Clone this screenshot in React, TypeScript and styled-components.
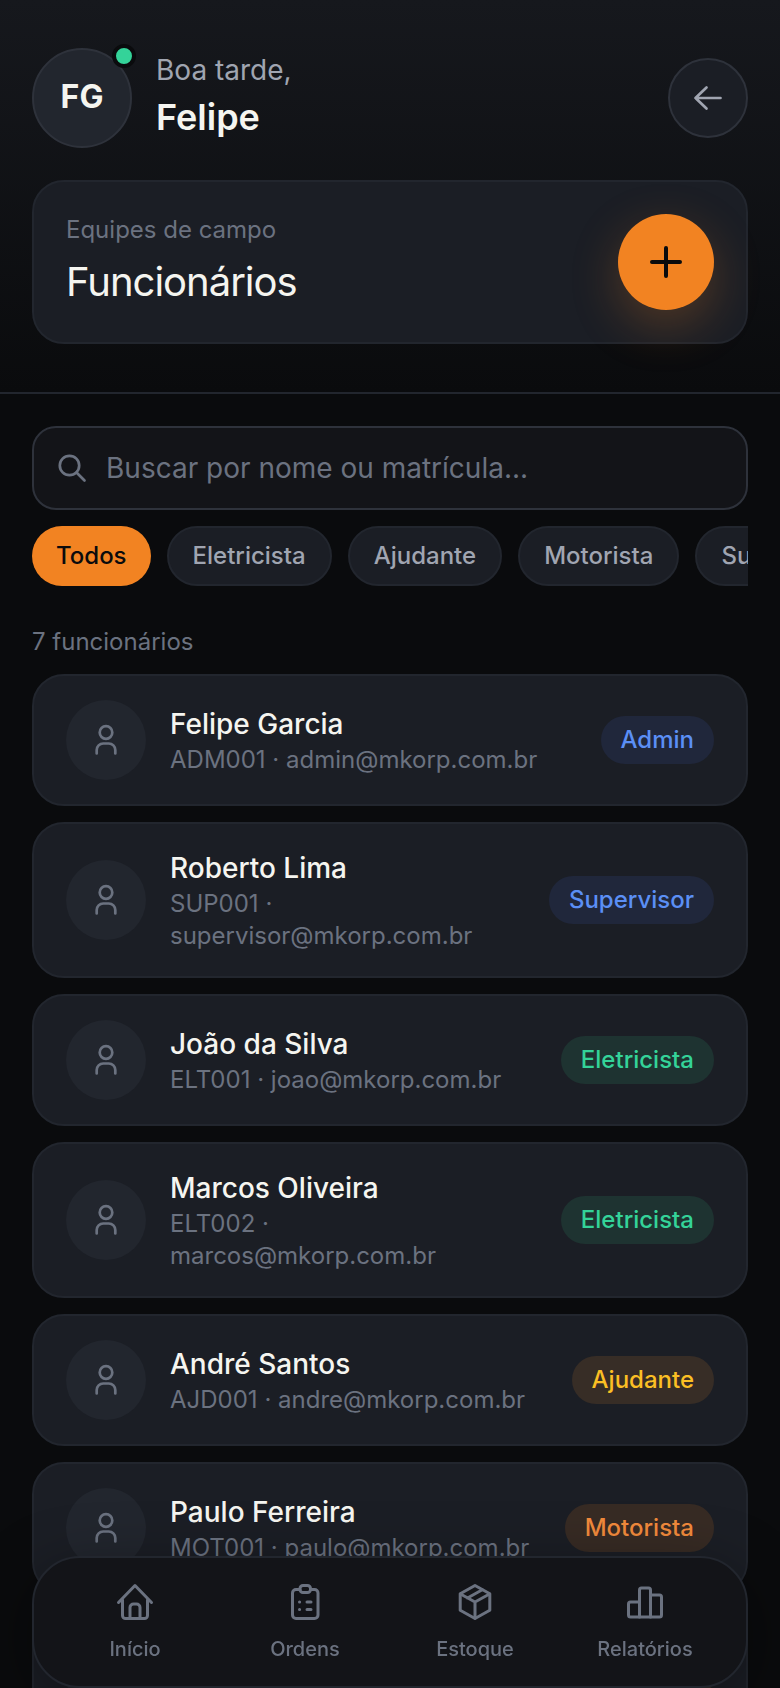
import React from "react";
import styled, { createGlobalStyle } from "styled-components";

const c = {
  bg: "#0a0b0d",
  surface: "#131418",
  card: "#1b1e25",
  raised: "#22262e",
  line: "#22262e",
  lineStrong: "#2e323b",
  text: "#f5f5f0",
  soft: "#a0a5b1",
  muted: "#6b7280",
  accent: "#f28322",
};

const GlobalStyle = createGlobalStyle`
  *, *::before, *::after { box-sizing: border-box; }
  body {
    margin: 0;
    background: ${c.bg};
    color: ${c.text};
    font-family: Inter, "Liberation Sans", sans-serif;
  }
  button, input { font-family: inherit; }
  h1, p, ul { margin: 0; padding: 0; }
`;

const Screen = styled.div`
  height: 100vh;
  overflow: hidden auto;
  scrollbar-width: none;
  background: ${c.bg};
`;

const Header = styled.header`
  display: flex;
  flex-direction: column;
  gap: 32px;
  padding: 48px 32px;
  border-bottom: 2px solid ${c.line};
  background: linear-gradient(180deg, #16181d 0%, ${c.bg} 100%);
`;

const HeaderRow = styled.div`
  display: flex;
  align-items: center;
  gap: 24px;
`;

const Avatar = styled.div`
  position: relative;
  display: flex;
  align-items: center;
  justify-content: center;
  width: 100px;
  height: 100px;
  padding-bottom: 4px;
  border: 2px solid ${c.lineStrong};
  border-radius: 50%;
  background: ${c.raised};
  font-size: 32px;
  font-weight: 700;
`;

const OnlineDot = styled.span`
  position: absolute;
  top: -6px;
  right: -6px;
  width: 24px;
  height: 24px;
  border: 4px solid ${c.bg};
  border-radius: 50%;
  background: #34d399;
`;

const Greeting = styled.div`
  display: flex;
  flex: 1;
  flex-direction: column;
  gap: 2px;
`;

const GreetingText = styled.p`
  color: ${c.soft};
  font-size: 28px;
  line-height: 36px;
`;

const UserName = styled.p`
  font-size: 36px;
  font-weight: 600;
  line-height: 54px;
`;

const RoundButton = styled.button<{ $accent?: boolean }>`
  display: flex;
  flex: none;
  align-items: center;
  justify-content: center;
  width: ${(p) => (p.$accent ? 96 : 80)}px;
  height: ${(p) => (p.$accent ? 96 : 80)}px;
  padding: 0;
  border: ${(p) => (p.$accent ? "0" : `2px solid ${c.lineStrong}`)};
  border-radius: 50%;
  background: ${(p) => (p.$accent ? c.accent : c.card)};
  color: ${(p) => (p.$accent ? c.bg : c.soft)};
  box-shadow: ${(p) => (p.$accent ? "0 16px 48px rgba(242, 131, 34, 0.25)" : "none")};
`;

const TitleCard = styled.section`
  display: flex;
  align-items: center;
  justify-content: space-between;
  padding: 28px 32px;
  border: 2px solid ${c.line};
  border-radius: 32px;
  background: ${c.card};
`;

const Eyebrow = styled.p`
  color: ${c.muted};
  font-size: 24px;
  line-height: 40px;
`;

const Title = styled.h1`
  font-size: 40px;
  font-weight: 400;
  line-height: 64px;
  letter-spacing: -1px;
`;

const Content = styled.main`
  padding: 32px 32px 180px;
`;

const SearchBox = styled.label`
  display: flex;
  align-items: center;
  gap: 18px;
  height: 84px;
  padding: 0 22px;
  border: 2px solid ${c.lineStrong};
  border-radius: 24px;
  background: ${c.surface};
  color: ${c.muted};
`;

const SearchInput = styled.input`
  flex: 1;
  min-width: 0;
  padding: 0;
  border: 0;
  outline: 0;
  background: transparent;
  color: ${c.text};
  font-size: 28px;
  &::placeholder { color: ${c.muted}; opacity: 1; }
`;

const Chips = styled.div`
  display: flex;
  gap: 16px;
  margin-top: 16px;
  overflow-x: auto;
  scrollbar-width: none;
`;

const Chip = styled.button<{ $active?: boolean }>`
  flex: none;
  padding: 10px 24px;
  border: ${(p) => (p.$active ? "0" : `2px solid ${c.line}`)};
  border-radius: 30px;
  background: ${(p) => (p.$active ? c.accent : c.card)};
  color: ${(p) => (p.$active ? c.bg : c.soft)};
  font-size: 24px;
  font-weight: 500;
  line-height: 36px;
`;

const Count = styled.p`
  margin: 36px 0 12px;
  color: ${c.muted};
  font-size: 24px;
  line-height: 40px;
`;

const List = styled.ul`
  display: flex;
  flex-direction: column;
  gap: 16px;
  list-style: none;
`;

const PersonCard = styled.li`
  display: flex;
  align-items: center;
  gap: 24px;
  padding: 24px 32px;
  border: 2px solid ${c.line};
  border-radius: 32px;
  background: ${c.card};
`;

const PersonIcon = styled.span`
  display: flex;
  flex: none;
  align-items: center;
  justify-content: center;
  width: 80px;
  height: 80px;
  border-radius: 50%;
  background: ${c.raised};
  color: ${c.muted};
`;

const PersonInfo = styled.div`
  flex: 1;
  min-width: 0;
`;

const PersonName = styled.p`
  font-size: 28px;
  font-weight: 500;
  line-height: 40px;
`;

const PersonDetail = styled.p`
  color: ${c.muted};
  font-size: 24px;
  line-height: 32px;
`;

const tones = {
  blue: ["#5b8ff5", "#20273b"],
  green: ["#34d399", "#1e3331"],
  yellow: ["#fbbf24", "#372d26"],
  orange: ["#f28a3c", "#372b24"],
};
type Tone = keyof typeof tones;

const Badge = styled.span<{ $tone: Tone }>`
  flex: none;
  padding: 6px 20px;
  border-radius: 24px;
  background: ${(p) => tones[p.$tone][1]};
  color: ${(p) => tones[p.$tone][0]};
  font-size: 24px;
  font-weight: 500;
  line-height: 36px;
`;

const TabBar = styled.nav`
  position: fixed;
  right: 32px;
  bottom: 0;
  left: 32px;
  display: flex;
  padding: 22px 16px 20px;
  border: 2px solid ${c.line};
  border-radius: 48px;
  background: ${c.surface};
  box-shadow: 0 16px 64px rgba(0, 0, 0, 0.4);
`;

const Tab = styled.a`
  display: flex;
  flex: 1;
  flex-direction: column;
  align-items: center;
  gap: 8px;
  color: ${c.muted};
  font-size: 20px;
  font-weight: 500;
  line-height: 34px;
  text-decoration: none;
`;

type IconProps = { size: number; stroke: number; children: React.ReactNode };
const Icon = ({ size, stroke, children }: IconProps) => (
  <svg
    width={size}
    height={size}
    viewBox={`0 0 ${size} ${size}`}
    fill="none"
    stroke="currentColor"
    strokeWidth={stroke}
    strokeLinecap="round"
    strokeLinejoin="round"
    aria-hidden="true"
  >
    {children}
  </svg>
);

const people: { name: string; code: string; email: string; role: string; tone: Tone }[] = [
  { name: "Felipe Garcia", code: "ADM001", email: "admin@mkorp.com.br", role: "Admin", tone: "blue" },
  { name: "Roberto Lima", code: "SUP001", email: "supervisor@mkorp.com.br", role: "Supervisor", tone: "blue" },
  { name: "João da Silva", code: "ELT001", email: "joao@mkorp.com.br", role: "Eletricista", tone: "green" },
  { name: "Marcos Oliveira", code: "ELT002", email: "marcos@mkorp.com.br", role: "Eletricista", tone: "green" },
  { name: "André Santos", code: "AJD001", email: "andre@mkorp.com.br", role: "Ajudante", tone: "yellow" },
  { name: "Paulo Ferreira", code: "MOT001", email: "paulo@mkorp.com.br", role: "Motorista", tone: "orange" },
  { name: "Carlos Souza", code: "AJD002", email: "carlos@mkorp.com.br", role: "Ajudante", tone: "yellow" },
];

const filters = ["Todos", "Eletricista", "Ajudante", "Motorista", "Supervisor", "Admin"];

const tabs = [
  {
    label: "Início",
    icon: (
      <>
        <path d="M5.5 22.5 22 5.500l16.500 17" />
        <path d="M9.500 20v15.500a3 3 0 0 0 3 3h19a3 3 0 0 0 3-3V20" />
        <path d="M17 38V27.500a3.500 3.500 0 0 1 3.500-3.500h3a3.500 3.500 0 0 1 3.500 3.500V38" />
      </>
    ),
  },
  {
    label: "Ordens",
    icon: (
      <>
        <path d="M17 9.500h-4a3.500 3.500 0 0 0-3.500 3.500v22a3.500 3.500 0 0 0 3.500 3.500h18.500a3.500 3.500 0 0 0 3.500-3.500V13a3.500 3.500 0 0 0-3.500-3.500h-4" />
        <rect x="17" y="5.500" width="10.500" height="7" rx="3" />
        <path d="M16.500 22h.1M16.500 29.500h.1M24 22h4M24 29.500h4" />
      </>
    ),
  },
  {
    label: "Estoque",
    icon: (
      <>
        <path d="M22 5.500 36.800 13.700v16.600L22 38.500 7.200 30.300V13.700z" />
        <path d="M7.500 14 22 22l14.500-8M22 22v16M14.500 18 29.300 9.700" />
      </>
    ),
  },
  {
    label: "Relatórios",
    icon: (
      <>
        <path d="M16.500 37V10a2 2 0 0 1 2-2h7a2 2 0 0 1 2 2v27" />
        <path d="M16.500 22h-9a2 2 0 0 0-2 2v11a2 2 0 0 0 2 2h29a2 2 0 0 0 2-2V17a2 2 0 0 0-2-2h-9" />
      </>
    ),
  },
];

export default function App() {
  return (
    <Screen>
      <GlobalStyle />
      <Header>
        <HeaderRow>
          <Avatar>
            FG
            <OnlineDot />
          </Avatar>
          <Greeting>
            <GreetingText>Boa tarde,</GreetingText>
            <UserName>Felipe</UserName>
          </Greeting>
          <RoundButton type="button" aria-label="Voltar">
            <Icon size={36} stroke={2.7}>
              <path d="M30.500 18h-25M16.500 7.500 5.500 18l11 10.500" />
            </Icon>
          </RoundButton>
        </HeaderRow>
        <TitleCard>
          <div>
            <Eyebrow>Equipes de campo</Eyebrow>
            <Title>Funcionários</Title>
          </div>
          <RoundButton $accent type="button" aria-label="Adicionar funcionário">
            <Icon size={44} stroke={4}>
              <path d="M22 8v28M8 22h28" />
            </Icon>
          </RoundButton>
        </TitleCard>
      </Header>
      <Content>
        <SearchBox>
          <Icon size={32} stroke={2.7}>
            <circle cx="13.500" cy="13.500" r="9.700" />
            <path d="m20.500 20.500 8 8" />
          </Icon>
          <SearchInput type="search" placeholder="Buscar por nome ou matrícula..." aria-label="Buscar por nome ou matrícula" />
        </SearchBox>
        <Chips>
          {filters.map((f, i) => (
            <Chip key={f} type="button" $active={i === 0}>
              {f}
            </Chip>
          ))}
        </Chips>
        <Count>{people.length} funcionários</Count>
        <List>
          {people.map((p) => (
            <PersonCard key={p.code}>
              <PersonIcon>
                <Icon size={40} stroke={2.7}>
                  <circle cx="20" cy="12.500" r="6.300" />
                  <path d="M10.700 33.500V30a6.500 6.500 0 0 1 6.500-6.500h5.600a6.500 6.500 0 0 1 6.500 6.500v3.500" />
                </Icon>
              </PersonIcon>
              <PersonInfo>
                <PersonName>{p.name}</PersonName>
                <PersonDetail>
                  {p.code} · {p.email}
                </PersonDetail>
              </PersonInfo>
              <Badge $tone={p.tone}>{p.role}</Badge>
            </PersonCard>
          ))}
        </List>
      </Content>
      <TabBar>
        {tabs.map((t) => (
          <Tab key={t.label} href="#">
            <Icon size={44} stroke={3}>
              {t.icon}
            </Icon>
            {t.label}
          </Tab>
        ))}
      </TabBar>
    </Screen>
  );
}
